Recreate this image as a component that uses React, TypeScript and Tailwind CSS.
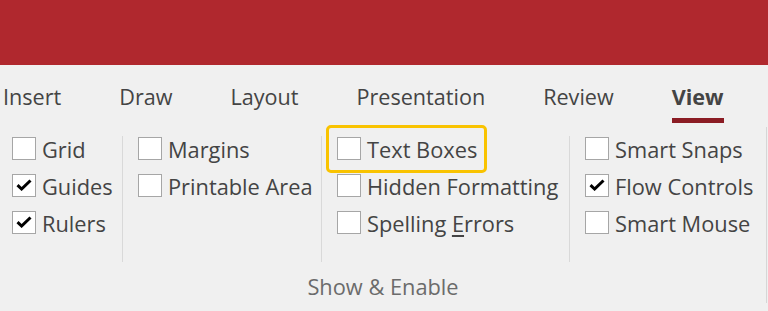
import type { ReactNode } from 'react';

// Ribbon "View" tab with the Show & Enable group.

const TABS = ['Insert', 'Draw', 'Layout', 'Presentation', 'Review', 'View'];

type Item = { label: ReactNode; checked?: boolean; highlight?: boolean };

const COLUMNS: { width: string; items: Item[] }[] = [
  {
    width: 'w-[122px] pl-[12px]',
    items: [{ label: 'Grid' }, { label: 'Guides', checked: true }, { label: 'Rulers', checked: true }],
  },
  {
    width: 'w-[198px] pl-[15px]',
    items: [{ label: 'Margins' }, { label: 'Printable Area' }],
  },
  {
    width: 'w-[247px] pl-[15px]',
    items: [
      { label: 'Text Boxes', highlight: true },
      { label: 'Hidden Formatting' },
      {
        label: (
          <>
            Spelling <span className="underline underline-offset-[3px]">E</span>rrors
          </>
        ),
      },
    ],
  },
  {
    width: 'w-[196px] pl-[15px]',
    items: [
      { label: 'Smart Snaps' },
      { label: 'Flow Controls', checked: true },
      { label: 'Smart Mouse' },
    ],
  },
];

function CheckRow({ item }: { item: Item }) {
  return (
    <div className="relative flex h-[37px] items-center gap-[6px]">
      {item.highlight && (
        <span className="pointer-events-none absolute -left-[11px] top-[-5px] h-[48px] w-[161px] rounded-[5px] border-[3px] border-[#f9c300]" />
      )}
      <span className="flex h-[23px] w-[24px] shrink-0 items-center justify-center border border-[#a6a6a6] bg-white">
        {item.checked && (
          <svg width="16" height="12" viewBox="0 0 16 12" className="-mt-[2px]">
            <path d="M1.5 6.2 L5.6 10 L14.5 1.5" fill="none" stroke="#000" strokeWidth="3" strokeLinejoin="miter" />
          </svg>
        )}
      </span>
      <span className="mt-[2px] whitespace-nowrap text-[21.8px] leading-[37px] text-[#444444]">{item.label}</span>
    </div>
  );
}

export default function App() {
  return (
    <div className="h-[311px] w-[768px] overflow-hidden bg-[#f0f0f0] font-['Open_Sans',sans-serif]">
      <div className="h-[65px] bg-[#b0282e]" />

      <div className="flex h-[62px] items-start gap-[58px] pl-[3px] pt-[17px]">
        {TABS.map((tab) => {
          const active = tab === 'View';
          return (
            <div key={tab} className="flex flex-col">
              <span
                className={`text-[21.6px] leading-[30px] text-[#444444] ${active ? 'font-bold' : ''}`}
              >
                {tab}
              </span>
              {active && <span className="mt-[6px] h-[5px] w-full bg-[#8b1c24]" />}
            </div>
          );
        })}
      </div>

      <div className="flex h-[176px] w-[767px] flex-col border-r border-[#d6d6d6]">
        <div className="flex pt-[3px]">
          {COLUMNS.map((col, i) => (
            <div key={i} className="flex">
              {i > 0 && <div className="mt-[6px] h-[126px] w-px bg-[#d9d9d9]" />}
              <div className={`flex flex-col ${col.width}`}>
                {col.items.map((item, j) => (
                  <CheckRow key={j} item={item} />
                ))}
              </div>
            </div>
          ))}
        </div>
        <div className="mt-[10px] text-center text-[21.8px] leading-[30px] text-[#6b6b6b]">
          Show &amp; Enable
        </div>
      </div>
    </div>
  );
}
